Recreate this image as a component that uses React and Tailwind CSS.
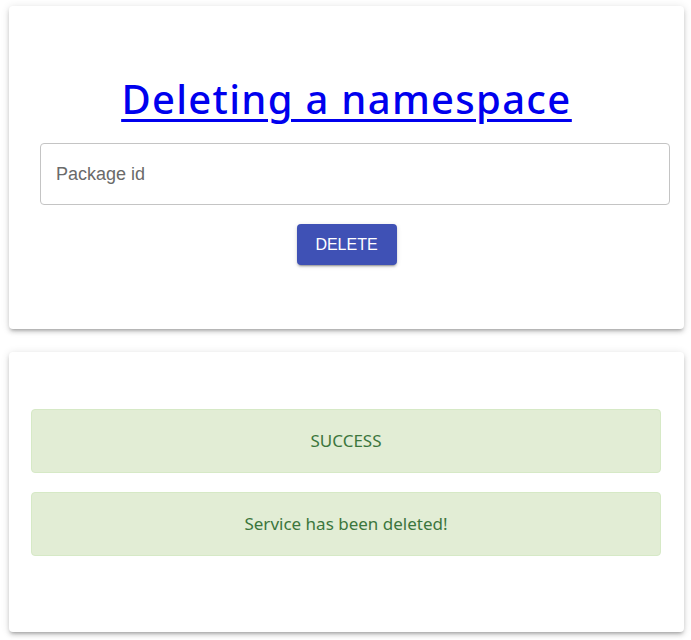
import React from "react";

export default function App() {
  return (
    <div className="w-[691px] min-h-[640px] bg-white pt-[6px] pl-[9px]">
      <div className="w-[675px] h-[323px] bg-white rounded-[4px] shadow-[0_3px_3px_-2px_rgba(0,0,0,0.2),0_3px_4px_0_rgba(0,0,0,0.14),0_1px_8px_0_rgba(0,0,0,0.12)] pt-[69px] flex flex-col">
        <h1 className="text-center text-[40px] leading-[48px] font-medium tracking-[1.3px] font-['Noto_Sans',sans-serif] text-[#0000ee] underline decoration-[3px] underline-offset-[5px]">
          <a href="#" className="text-[#0000ee]">Deleting a namespace</a>
        </h1>
        <div className="pl-[31px] pr-[14px] mt-[20px]">
          <div className="h-[62px] border border-[#c4c4c4] rounded-[4px] flex items-center px-[15px]">
            <input
              placeholder="Package id"
              className="w-full outline-none text-[18px] font-['Liberation_Sans',Arial,sans-serif] placeholder:text-[#6a6a6a] text-[#333]"
            />
          </div>
        </div>
        <div className="flex justify-center mt-[19px]">
          <button className="w-[100px] h-[41px] bg-[#3f51b5] text-white rounded-[4px] text-[16px] font-['Liberation_Sans',Arial,sans-serif] shadow-[0_3px_1px_-2px_rgba(0,0,0,0.2),0_2px_2px_0_rgba(0,0,0,0.14),0_1px_5px_0_rgba(0,0,0,0.12)]">
            DELETE
          </button>
        </div>
      </div>

      <div className="mt-[23px] w-[675px] h-[280px] bg-white rounded-[4px] shadow-[0_3px_3px_-2px_rgba(0,0,0,0.2),0_3px_4px_0_rgba(0,0,0,0.14),0_1px_8px_0_rgba(0,0,0,0.12)] pt-[57px] pl-[22px] pr-[23px] flex flex-col gap-[19px] font-['Noto_Sans',sans-serif]">
        <div className="h-[64px] rounded-[4px] border border-[#d6e9c6] bg-[#e2edd5] text-[#3c763d] text-[17px] flex items-center justify-center">
          SUCCESS
        </div>
        <div className="h-[64px] rounded-[4px] border border-[#d6e9c6] bg-[#e2edd5] text-[#3c763d] text-[17px] flex items-center justify-center">
          Service has been deleted!
        </div>
      </div>
    </div>
  );
}
